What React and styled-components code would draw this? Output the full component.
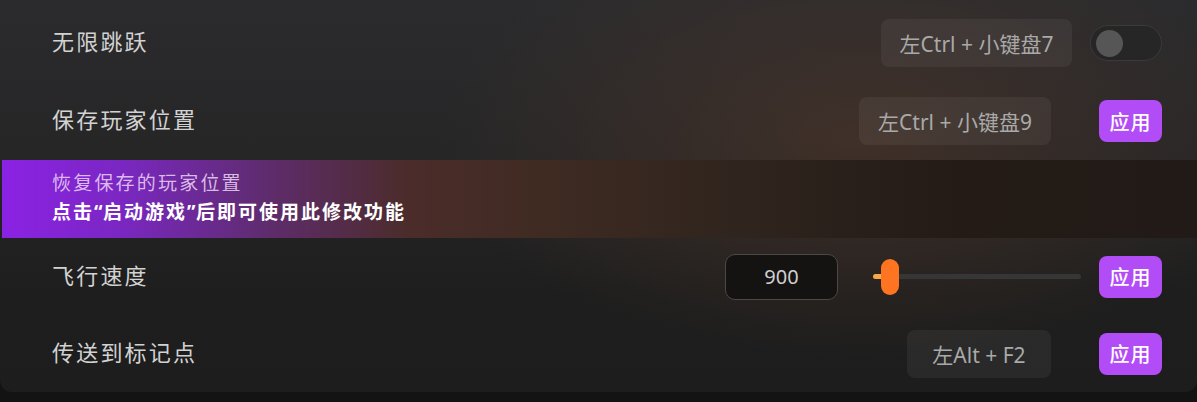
import React from "react";
import styled, { createGlobalStyle } from "styled-components";

const Global = createGlobalStyle`
  html, body { margin: 0; padding: 0; background: #131313; }
  body { font-family: "Noto Sans CJK SC", "Noto Sans", sans-serif; }
`;

const Panel = styled.div`
  width: 1197px;
  padding-top: 4px;
  border-radius: 0 0 12px 12px;
  overflow: hidden;
  background:
    radial-gradient(ellipse 420px 220px at 860px 140px, rgba(95, 60, 42, 0.45), rgba(95, 60, 42, 0) 100%),
    linear-gradient(180deg, #2b2b2d 0%, #252526 45%, #1e1e1e 75%, #1d1d1d 100%);
`;

const Row = styled.div`
  height: ${(p) => p.$h}px;
  display: flex;
  align-items: center;
  padding: 0 35px 0 52px;
  box-sizing: border-box;
`;

const Title = styled.div`
  flex: 1;
  font-size: 22px;
  letter-spacing: 2.2px;
  color: #d2d2d2;
  padding-bottom: 6px;
`;

const Controls = styled.div`
  display: flex;
  align-items: center;
  gap: ${(p) => p.$gap}px;
`;

const KeyBadge = styled.div`
  width: ${(p) => p.$w}px;
  height: 48px;
  border-radius: 8px;
  background: rgba(255, 255, 255, 0.055);
  color: #a9a9a9;
  font-family: "Noto Sans", "Noto Sans CJK SC", sans-serif;
  font-size: 21px;
  display: flex;
  align-items: center;
  justify-content: center;
  box-sizing: border-box;
`;

const ApplyButton = styled.button`
  width: 63px;
  height: 42px;
  border: none;
  border-radius: 8px;
  background: #b24cf6;
  color: #ffffff;
  font-family: inherit;
  font-size: 20px;
  font-weight: 500;
  letter-spacing: 1px;
  padding: 0;
  cursor: pointer;
`;

const Toggle = styled.div`
  width: 72px;
  height: 36px;
  border-radius: 18px;
  background: #262626;
  border: 1px solid #3a3a3a;
  box-sizing: border-box;
  display: flex;
  align-items: center;
  padding-left: 5px;
`;

const Knob = styled.div`
  width: 27px;
  height: 27px;
  border-radius: 50%;
  background: #565656;
`;

const Banner = styled.div`
  height: 78px;
  margin-left: 2px;
  padding-left: 50px;
  padding-bottom: 4px;
  box-sizing: border-box;
  display: flex;
  flex-direction: column;
  justify-content: center;
  background: linear-gradient(90deg, #8b22e4 0%, #7a27c2 10%, #5f2c6e 22%, #4b2c2a 34%, #3f2b22 45%, #2f241e 62%, #241b16 80%, #211a16 100%);
`;

const BannerTitle = styled.div`
  font-size: 19px;
  letter-spacing: 2.2px;
  color: rgba(236, 214, 246, 0.85);
  line-height: 29px;
`;

const BannerNote = styled.div`
  font-family: "Noto Sans CJK SC", sans-serif;
  font-size: 19px;
  font-weight: 700;
  letter-spacing: 2px;
  color: #ffffff;
  line-height: 29px;
`;

const Quote = styled.span`
  font-family: "Noto Sans", sans-serif;
  letter-spacing: 0.5px;
`;

const NumberInput = styled.div`
  width: 113px;
  height: 46px;
  box-sizing: border-box;
  border-radius: 10px;
  border: 1.5px solid #4a4948;
  background: #141312;
  color: #cfcfcf;
  font-family: "Noto Sans", sans-serif;
  font-size: 20px;
  display: flex;
  align-items: center;
  justify-content: center;
  margin-right: 17px;
`;

const Slider = styled.div`
  position: relative;
  width: 208px;
  height: 36px;
  display: flex;
  align-items: center;
`;

const Track = styled.div`
  width: 100%;
  height: 5px;
  border-radius: 3px;
  background: #363636;
`;

const Fill = styled.div`
  position: absolute;
  left: 0;
  top: 50%;
  height: 5px;
  margin-top: -2.5px;
  border-radius: 3px;
  background: #f7a94a;
`;

const Thumb = styled.div`
  position: absolute;
  top: 0;
  width: 18px;
  height: 36px;
  border-radius: 9px;
  background: #ff7420;
`;

export default function App() {
  const pct = 0.06;
  return (
    <>
      <Global />
      <Panel>
        <Row $h={78}>
          <Title>无限跳跃</Title>
          <Controls $gap={18}>
            <KeyBadge $w={191}>左Ctrl + 小键盘7</KeyBadge>
            <Toggle>
              <Knob />
            </Toggle>
          </Controls>
        </Row>
        <Row $h={78}>
          <Title>保存玩家位置</Title>
          <Controls $gap={48}>
            <KeyBadge $w={192}>左Ctrl + 小键盘9</KeyBadge>
            <ApplyButton>应用</ApplyButton>
          </Controls>
        </Row>
        <Banner>
          <BannerTitle>恢复保存的玩家位置</BannerTitle>
          <BannerNote>
            点击<Quote>“</Quote>启动游戏<Quote>”</Quote>后即可使用此修改功能
          </BannerNote>
        </Banner>
        <Row $h={77}>
          <Title>飞行速度</Title>
          <Controls $gap={18}>
            <NumberInput>900</NumberInput>
            <Slider>
              <Track />
              <Fill style={{ width: `${pct * 208 + 4}px` }} />
              <Thumb style={{ left: `${pct * 208 - 4}px` }} />
            </Slider>
            <ApplyButton>应用</ApplyButton>
          </Controls>
        </Row>
        <Row $h={77}>
          <Title>传送到标记点</Title>
          <Controls $gap={48}>
            <KeyBadge $w={144}>左Alt + F2</KeyBadge>
            <ApplyButton>应用</ApplyButton>
          </Controls>
        </Row>
      </Panel>
    </>
  );
}
